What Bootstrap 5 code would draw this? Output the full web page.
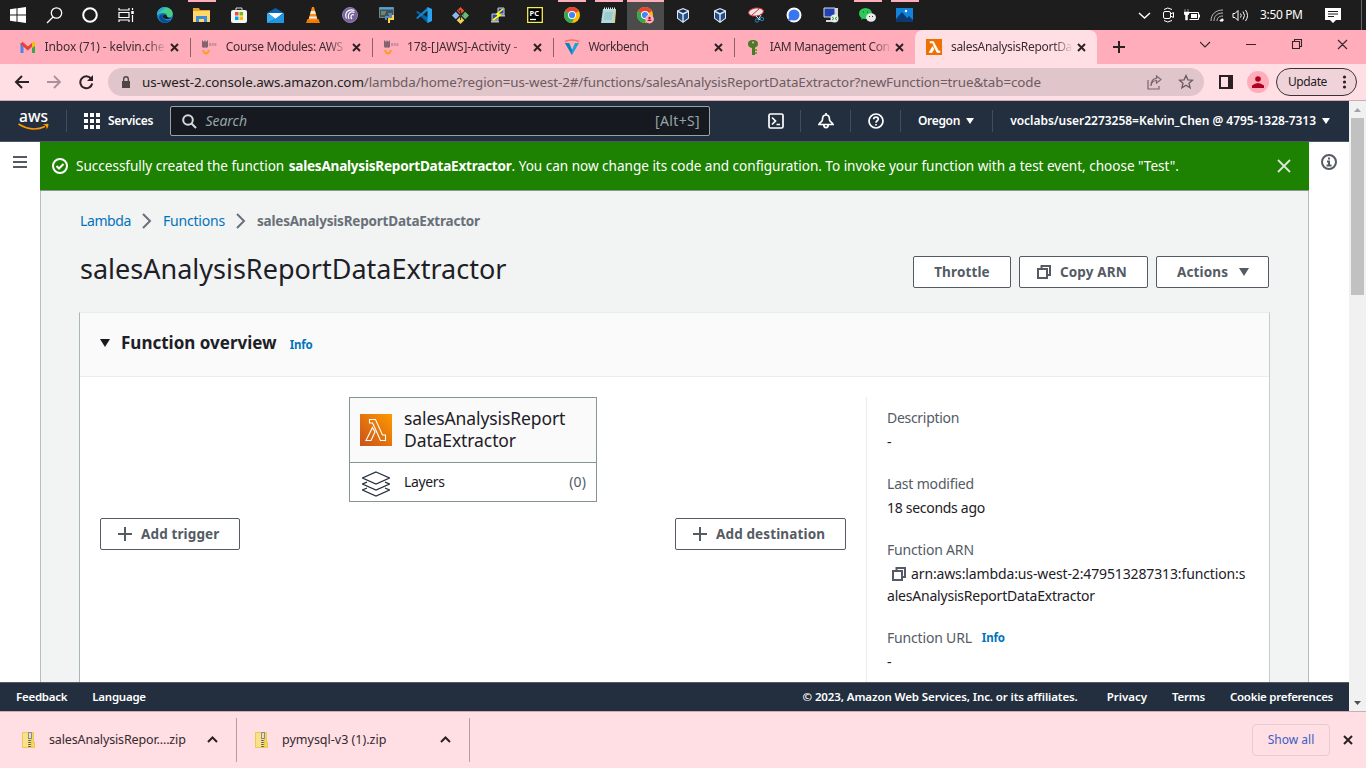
<!DOCTYPE html>
<html lang="en">
<head>
<meta charset="utf-8">
<title>salesAnalysisReportDataExtractor - Lambda</title>
<link href="https://cdn.jsdelivr.net/npm/bootstrap@5.3.0/dist/css/bootstrap.min.css" rel="stylesheet">
<script src="https://cdn.jsdelivr.net/npm/bootstrap@5.3.0/dist/js/bootstrap.bundle.min.js"></script>
<style>
body{width:1366px;height:768px;overflow:hidden;font-family:"Noto Sans","Open Sans",sans-serif;font-size:14px;line-height:22px;color:#1d2026;background:#fff}
svg{display:block;flex:none}
span,a{white-space:nowrap}
a{text-decoration:none}
.taskbar{height:30px;background:#1d1d1d;color:#fff}
.sys{width:36px}
.app{width:37px;position:relative}
.sys,.app{height:30px;display:flex;align-items:center;justify-content:center}
.app.run::before{content:"";position:absolute;top:0;left:4.5px;width:28px;height:2px;background:#ffadba}
.app.on{background:#4b4b4b}
.app.on::before{left:0;width:37px}
.tray{width:24px;display:flex;justify-content:center}
.clock{font-size:12px;width:43px;letter-spacing:-.35px}
.strip{height:34px;background:#ffadba;padding-left:9px}
.tab{width:181.3px;height:34px;padding-left:11px;position:relative;font-size:12px;color:#3c2c33}
.tab .ttl{width:122px;margin-left:8.5px;overflow:hidden;-webkit-mask-image:linear-gradient(90deg,#000 84%,transparent)}
.tab+.tab:not(.active)::before{content:"";position:absolute;left:0;top:8px;width:1px;height:19px;background:#8e6169}
.tab.active{background:#ffdee4;border-radius:8px 8px 0 0}
.tab .x{margin-left:auto;margin-right:11px}
.urlrow{height:36px;background:#ffdee4;padding-left:14px}
.pill{width:1096px;height:28px;border-radius:14px;background:#e0c5ca;padding:0 9px 0 11px;color:#6d5b60;font-size:13.4px;letter-spacing:-.09px}
.pill b{font-weight:400;color:#241d20}
.avatar{width:22px;height:22px;border-radius:50%;background:#ffadba}
.upd{width:81px;height:28px;border:1px solid #3a3236;border-radius:14px;background:#f0d3d9;font-size:12px;padding:0 7px 0 11px}
.view{height:611px;border-top:1px solid #c9adb2}
.awsnav{height:41px;background:#232f3e;color:#fff;font-size:12px;border-bottom:1px solid #4d5763;padding-left:18px;font-weight:600}
.vr1{width:1px;height:22px;background:#414d5c}
.find{width:540px;height:30px;border:1px solid #95a5a6;border-radius:2px;background:#16191f;color:#95a5a6;font-size:14px;font-weight:400;padding:0 9px 0 11px}
.stage{height:540px;overflow:hidden}
.side{width:40px;background:#fff}
.main{width:1269px;background:#f2f3f3;border:solid #b5bdbd;border-width:0 1px}
.flash{height:49px;margin:0 -1px;background:#1d8102;color:#fff;padding:0 17px 0 12px;border-bottom:1px solid #8a9690;position:relative;font-size:13.6px;letter-spacing:-.035px}
.flash strong{letter-spacing:-.25px;margin-left:1px}
.crumbs{margin:19px 0 0 39px;height:22px}
.crumbs a,.info{color:#0073bb}
.crumbs strong{color:#687078;font-size:13.5px}
.headrow{margin:14px 39px 0;height:50px}
h1{font-size:27px;line-height:36px;font-weight:400;margin:-5px 0 0}
.ab{height:32px;border:1px solid #545b64;border-radius:2px;background:#fff;color:#545b64;font-weight:700;display:flex;align-items:center;font-size:13.5px;letter-spacing:.13px}
.headrow .ab{margin-top:1px}
.panel{margin:16px 38px 0 38px;height:380px;background:#fff;border:1px solid #eaeded;border-color:#eaeded #c5cccc #eaeded #aab7b8}
.phead{height:64px;background:#fafafa;border-bottom:1px solid #eaeded;padding-left:20px}
h2{font-size:17px;font-weight:700;margin:-4px 0 0 11px;line-height:22px}
.info{font-size:11.5px;font-weight:700;letter-spacing:-.15px}
.fn{width:248px;height:105px;border:1px solid #879596;margin:20px auto 0}
.fntop{height:65px;background:#fafafa;border-bottom:1px solid #879596;font-size:17.5px;letter-spacing:-.1px;line-height:22px;padding:0 0 2px 10px}
.diagram{width:786px;padding:0 20px}
.details{margin-top:20px;border-left:1px solid #eaeded;padding:10px 0 0 20px;flex:1;letter-spacing:-.18px}
.details dt{font-weight:400;color:#545b64;height:22px}
.details dd{margin:2px 0 20px}
.sbar{width:17px;background:#f1f1f1}
.thumb{width:13px;height:177px;background:#c1c1c1;margin:2px auto auto}
.foot{height:29px;background:#232f3e;border-top:1px solid #545b64;color:#fff;font-size:11.5px;font-weight:600;padding:0 16px}
.dl{height:57px;background:#ffdee4;border-top:1px solid #c9adb2;font-size:12.5px;color:#332a2e}
.item{width:237px;height:44px;border-right:1px solid #b59ca1;padding:0 18px 0 22px;margin-bottom:1px}
.showall{width:78px;height:32px;border:1px solid #e3ccd4;border-radius:4px;color:#3a5fc4;font-size:12px}
.f-t1{letter-spacing:-.11px}.f-t2{letter-spacing:-.3px}.f-t3{letter-spacing:-.14px}.f-t4{letter-spacing:-.48px}.f-t5{letter-spacing:-.38px}.f-t6{letter-spacing:-.3px}
.f-upd{letter-spacing:-.4px}.f-serv,.f-or{letter-spacing:-.34px}.f-search{letter-spacing:-.05px}.f-alt{letter-spacing:.35px}.f-voc{letter-spacing:-.03px}
.f-lam{letter-spacing:-.39px}.f-fun{letter-spacing:-.2px}.f-crumb{letter-spacing:-.2px}
.f-lay{letter-spacing:-.35px}.f-zero{letter-spacing:.1px}
.f-d1{letter-spacing:-.3px}.f-d3{letter-spacing:-.29px}.f-d5{letter-spacing:-.13px}.f-d6{letter-spacing:-.21px}
.f-f1,.f-f2{letter-spacing:-.25px}.f-f3{letter-spacing:-.1px}.f-f5,.f-f6{letter-spacing:-.27px}
.f-z1{letter-spacing:-.14px}
</style>
</head>
<body>
<svg width="0" height="0" class="position-absolute"><defs>
<g id="cross"><path d="M1 1l7 7M8 1l-7 7" stroke="#2a2024" stroke-width="1.9"/></g>
<g id="chrome"><circle cx="8" cy="8" r="8" fill="#fbbc05"/><path d="M8 8L1.100 4A8 8 0 0 1 14.900 4z" fill="#ea4335"/><path d="M8 8L1.100 4A8 8 0 0 0 7.800 16L11 9.500z" fill="#34a853"/><circle cx="8" cy="8" r="4" fill="#fff"/><circle cx="8" cy="8" r="3.100" fill="#4285f4"/></g>
<g id="vbox"><path d="M6 0l6 2.500v8L6 15 0 10.500v-8z" fill="#dfe8f3"/><path d="M6 1.200l4.300 1.800L6 5 1.700 3z" fill="#14305c"/><path d="M1 4.300L5.300 6.400v6.800L1 10zM11 4.300L6.700 6.400v6.800L11 10z" fill="#254d86"/></g>
<g id="canvas"><path d="M1 8V1l2 2 1-2 1 2 2-2v7l-2 1-1-1-1 1z" fill="#82636f"/><path d="M8 5.500h8" stroke="#c98e9b" stroke-width="3" stroke-dasharray="2 .7"/><path d="M2 11c1 4.500 5 4.500 6 0" fill="none" stroke="#ff9b22" stroke-width="2"/></g>
<g id="zip"><path d="M.500.500h9v15h-9z" fill="#f9e08a" stroke="#ecc94f"/><path d="M9.500 10.500h3v5h-3zM9.500.500h2v10h-2z" fill="#f7d564" stroke="#ecc94f"/><path d="M7.500 6v10" stroke="#555" stroke-width="2.500" stroke-dasharray="1 1"/><path d="M6.500.500h3v6h-3z" fill="#ddd" stroke="#777" stroke-width=".8"/></g>
<g id="copy"><path d="M1 4h9v9H1zM4.500 4V1H13v9H10" fill="none" stroke="#545b64" stroke-width="2"/></g>
</defs></svg>

<div class="taskbar d-flex align-items-center">
 <div class="sys"><svg width="16" height="16"><path d="M0 2.300L6.500 1.300V7.500H0zM7.500 1.200L16 0v7.500H7.500zM0 8.500h6.500v6.200L0 13.700zM7.500 8.500H16V16l-8.500-1.200z" fill="#fff"/></svg></div>
 <div class="sys"><svg width="17" height="17" fill="none" stroke="#fff" stroke-width="1.300"><circle cx="10.500" cy="6" r="5.200"/><path d="M7 10L1 16"/></svg></div>
 <div class="sys"><svg width="16" height="16"><circle cx="8" cy="8" r="6.800" fill="none" stroke="#fff" stroke-width="2"/></svg></div>
 <div class="sys" style="margin-right:2px"><svg width="17" height="16" fill="none" stroke="#fff" stroke-width="1.200"><path d="M1 1v2h10V1M1 5.500h10v5H1zM1 15v-2h10v2M14.500 1v2M14.500 8v7"/><path d="M14.500 4v3" stroke-width="2.500"/></svg></div>
 <div class="app"><svg width="16" height="16"><circle cx="8" cy="8" r="8" fill="#1687d0"/><path d="M0 8C0 2 6-1 11 .800c5 2 6 7.200 3 9.200-2 1-4 .500-4-.800C11 6 5 4 0 8z" fill="#47cf83"/><path d="M0 8C0 3 4 0 8 0c1 2-4 3-8 8z" fill="#2aa6df"/><path d="M6 7c-2 4 2 8 7.500 5.800C11 17 4 17 2 11 2 8 4 7 6 7z" fill="#0c4c94"/><path d="M6 8.500C5 12 10 13 14.500 11c0-1-4 .500-4.500-1.800C9 7 7 7 6 8.500z" fill="#1d1d1d"/></svg></div>
 <div class="app run"><svg width="17" height="14"><path d="M0 0h6l1 2h10v3H0z" fill="#e2a526"/><path d="M0 3h17v11H0z" fill="#ffd86b"/><path d="M3 14V8h11v6h-3v-3H6v3z" fill="#3d8ed9"/></svg></div>
 <div class="app"><svg width="16" height="16"><path d="M5 4V1h6v3" fill="none" stroke="#ddd"/><rect y="3" width="16" height="13" rx="2" fill="#f4f4f4"/><path d="M4 5h3.500v3.500H4z" fill="#f25022"/><path d="M8.500 5H12v3.500H8.500z" fill="#7fba00"/><path d="M4 9.500h3.500V13H4z" fill="#00a4ef"/><path d="M8.500 9.500H12V13H8.500z" fill="#ffb900"/></svg></div>
 <div class="app"><svg width="17" height="15"><path d="M0 5l8.500-5L17 5v10H0z" fill="#0a62b1"/><path d="M1 5h15l-7.500 6z" fill="#fff"/><path d="M0 5l8.500 5.500L0 15z" fill="#35aef0"/><path d="M17 5v10H0L9 10.500z" fill="#2196e0"/></svg></div>
 <div class="app"><svg width="14" height="16"><path d="M0 16l1.500-4h11L14 16z" fill="#f07a00"/><path d="M2.500 12.500L6 0h2l3.500 12.500C9 14 5 14 2.500 12.500z" fill="#ff8b0d"/><path d="M5 4h4l.8 3H4.200zM3.500 9.500h7l.5 2H3z" fill="#eee"/></svg></div>
 <div class="app"><svg width="16" height="16" fill="none" stroke="#fff"><circle cx="8" cy="8" r="7.500" fill="#75639b" stroke="#8f80b0"/><path d="M12.500 3.500C6.500 1 2 6 4.500 11.500M12.500 5.500C8.500 3.500 5 7 7 12M12 8c-3-1.500-4 2-2 4" stroke-width="1.200"/></svg></div>
 <div class="app"><svg width="16" height="16"><path d="M.500.500h14v10H.500z" fill="#45505a" stroke="#71828f"/><path d="M.500.500h14v2H.500z" fill="#4da4d8"/><path d="M2 5h5M2 7h4" stroke="#80c880"/><path d="M9 6h4v4H8v3H6v-4h4z" fill="#4b8bbe"/><path d="M15 8v5h-4v3H9v-5h4V8z" fill="#ffd343"/></svg></div>
 <div class="app"><svg width="16" height="16"><path d="M0 5l1.500-1L16 13l-4.500 3z" fill="#0065a9"/><path d="M0 11l1.500 1L12 3.500V0z" fill="#0f86cf"/><path d="M11.500 0L16 2v12l-4.500 2z" fill="#2ba4ef"/></svg></div>
 <div class="app"><svg width="17" height="17"><path d="M8.500 0l3.800 3.800-3.800 3.700-3.800-3.700z" fill="#f05133"/><path d="M3.800 4.700l3.700 3.800-3.700 3.800L0 8.500z" fill="#8fb8f0"/><path d="M13.200 4.700L17 8.500l-3.800 3.800-3.700-3.800z" fill="#67bd6b"/><path d="M8.500 9.500l3.800 3.700L8.500 17l-3.800-3.800z" fill="#f1d15a"/><path d="M8.500 3v10M6 3l5.500 5" stroke="#332" stroke-width="1"/></svg></div>
 <div class="app"><svg width="16" height="16"><path d="M8 1h6v6H8zM2 7h6v6H2z" fill="#2c48b5" stroke="#ccc"/><path d="M7 8.500h8M1 14.500h8" stroke="#bbb" stroke-width="2"/><path d="M13 2L7 7l3 1-7 5" stroke="#ff0" stroke-width="1.600" fill="none"/></svg></div>
 <div class="app"><svg width="16" height="16"><path d="M.700.700h14.600v14.600H.700z" fill="#000" stroke="#f4ef4e" stroke-width="1.300"/><path d="M3 12.500h6" stroke="#fff" stroke-width="1.300"/><text x="2.500" y="9" fill="#fff" font-size="7.500" font-weight="700">PC</text></svg></div>
 <div class="app run"><svg width="16" height="16"><use href="#chrome"/></svg></div>
 <div class="app run"><svg width="16" height="16"><path d="M2 2h13l-2 14H0z" fill="#b1dadd"/><path d="M14 3h1l-1 13h-2z" fill="#e3c878"/><path d="M3 1.500h12" stroke="#e8eeee" stroke-width="2" stroke-dasharray="1 1"/><path d="M4 6h8M3.500 8h8M3 10h8M3 12h8" stroke="#75aeb5" stroke-width=".7"/></svg></div>
 <div class="app run on"><svg width="17" height="17"><use href="#chrome"/><circle cx="12.500" cy="12" r="4.400" fill="#ffadba"/><circle cx="12.500" cy="11" r="1.200" fill="#a31335"/><path d="M10.500 14c0-2 4-2 4 0z" fill="#a31335"/></svg></div>
 <div class="app"><svg width="12" height="15"><use href="#vbox"/></svg></div>
 <div class="app"><svg width="12" height="15"><use href="#vbox"/></svg></div>
 <div class="app"><svg width="17" height="16"><ellipse cx="8" cy="5" rx="7.500" ry="4" fill="#e6e7eb" stroke="#d22b2f" transform="rotate(-8 8 5)"/><path d="M4 8l7-6" stroke="#d22b2f"/><path d="M8 9l4 4M13 8l-3 5" stroke="#ddd"/><circle cx="9" cy="13.500" r="1.700" fill="none" stroke="#2689c9"/><circle cx="14" cy="12" r="1.700" fill="none" stroke="#2689c9"/></svg></div>
 <div class="app"><svg width="16" height="16"><circle cx="8" cy="8" r="6.500" fill="#3a76f0" stroke="#fff" stroke-width="2"/><path d="M2 14l1-4 3 3z" fill="#3a76f0"/></svg></div>
 <div class="app"><svg width="16" height="16"><path d="M1 1h11v9H1z" fill="#2341b4" stroke="#ddd"/><path d="M12 1h3v10h-3zM3 13h8v2H3z" fill="#d8d8d8"/><circle cx="11.500" cy="11.500" r="4" fill="#e6eee5"/><path d="M9 10l2 1.500L9 13M14 10l-2 1.500 2 1.500" stroke="#389646" fill="none"/></svg></div>
 <div class="app run"><svg width="17" height="15"><ellipse cx="6.500" cy="5.500" rx="6.500" ry="5.500" fill="#2dc956"/><path d="M2 12l1-3h3z" fill="#2dc956"/><ellipse cx="12" cy="9.500" rx="5" ry="4.200" fill="#e9e9e9"/><path d="M4 4h1M8 4h1M10 8.500h1M13 8.500h1" stroke="#333"/></svg></div>
 <div class="app run"><svg width="17" height="14"><path d="M0 0h17v14H0z" fill="#1283dd"/><path d="M0 11l6-7 5 6 2-2 4 4v2H0z" fill="#0c3970"/><circle cx="10" cy="3" r="1.200" fill="#fff"/></svg></div>
 <div class="d-flex align-items-center ms-auto">
  <div class="tray"><svg width="13" height="7" style="margin-right:2px"><path d="M1 1l5.500 5L12 1" fill="none" stroke="#fff" stroke-width="1.400"/></svg></div>
  <div class="tray"><svg width="13" height="16" fill="none" stroke="#fff" style="margin-right:2px"><rect x="1.500" y="4.500" width="7" height="7" rx="1.500"/><path d="M8.500 7l3-1.500v5l-3-1.500M2 2.500Q5.500-.500 10 2.500M2 13.500Q5.500 16.500 10 13.500"/></svg></div>
  <div class="tray"><svg width="16" height="12" style="margin-right:2px"><path d="M4.500 3.500h10v7h-9" fill="none" stroke="#fff"/><path d="M7 5h6v4H7zM14.500 5.500H16v3h-1.500z" fill="#fff"/><path d="M1 0v3M4 0v3M0 3h5v2L3.500 6.500V11h-2V6.500L0 5z" fill="#fff" stroke="#fff" stroke-width=".5"/></svg></div>
  <div class="tray"><svg width="14" height="13" fill="none" stroke="#bbb"><path d="M1 12C1 5 6 1 13 1M4 12c0-5 3-8 9-8M7 12c0-3 2-5 6-5"/><path d="M10 12c0-1 1-2 3-2v2z" fill="#fff" stroke="#fff"/></svg></div>
  <div class="tray"><svg width="17" height="13" fill="none" stroke="#fff" style="margin-right:2px"><path d="M1 4.500h2L6 1.500v10L3 8.500H1zM8.500 4.500q1.500 2 0 4M11 2.500q3 4 0 8M13.500 1q4 5.500 0 11"/></svg></div>
  <div class="clock" style="margin-left:7px"><span>3:50 PM</span></div>
  <div style="margin:0 20px 0 22px"><svg width="16" height="15"><path d="M0 0h16v12h-5l-3 3-3-3H0z" fill="#fff"/><path d="M3 3.500h10M3 6h10M3 8.500h6" stroke="#1d1d1d"/></svg></div>
  <div style="width:5px;height:30px;border-left:1px solid #666"></div>
 </div>
</div>

<div class="strip d-flex">
 <div class="tab d-flex align-items-center"><svg width="16" height="12"><path d="M2 12V2" stroke="#4285f4" stroke-width="3"/><path d="M13.500 12V2" stroke="#34a853" stroke-width="3"/><path d="M1.500 2l6.300 5.500L14 2" fill="none" stroke="#ea4335" stroke-width="3"/><path d="M12 1h3v4l-3 2z" fill="#fbbc04"/></svg><div class="ttl"><span class="f-t1">Inbox (71) - kelvin.che</span></div><svg class="x" width="9" height="9"><use href="#cross"/></svg></div>
 <div class="tab d-flex align-items-center"><svg width="16" height="16"><use href="#canvas"/></svg><div class="ttl"><span class="f-t2">Course Modules: AWS</span></div><svg class="x" width="9" height="9"><use href="#cross"/></svg></div>
 <div class="tab d-flex align-items-center"><svg width="16" height="16"><use href="#canvas"/></svg><div class="ttl"><span class="f-t3">178-[JAWS]-Activity - </span></div><svg class="x" width="9" height="9"><use href="#cross"/></svg></div>
 <div class="tab d-flex align-items-center"><svg width="16" height="16"><path d="M1 4h4l3 7 3-7h4L8 16z" fill="#19a4d9"/><path d="M8 16V11L5 4H1z" fill="#0b82ba"/><path d="M1 2.500q7-3 14 0" fill="none" stroke="#ff6b4a" stroke-width="1.500"/></svg><div class="ttl"><span class="f-t4">Workbench</span></div><svg class="x" width="9" height="9"><use href="#cross"/></svg></div>
 <div class="tab d-flex align-items-center"><svg width="16" height="16"><path d="M8 1c3 0 5 1 5 4 0 2-1 3-3 3.500V16H7V9C4 8.500 3 7 3 5c0-3 2-4 5-4z" fill="#4d7a2a"/><path d="M10 10h2v2h-2zM10 13h2v2h-2z" fill="#759c3e"/><circle cx="8" cy="3.500" r="1" fill="#ffadba"/></svg><div class="ttl"><span class="f-t5">IAM Management Con</span></div><svg class="x" width="9" height="9"><use href="#cross"/></svg></div>
 <div class="tab active d-flex align-items-center"><svg width="16" height="16"><path d="M0 0h16v16H0z" fill="#ed7100"/><path d="M4 2.500h3.500l5 9.500H14v1.500h-3L7.500 6.500 7 4H4zM6.500 7.500L8 10l-2 3.500H3z" fill="#fff" stroke="#fff" stroke-width=".6"/></svg><div class="ttl"><span class="f-t6">salesAnalysisReportDa</span></div><svg class="x" width="9" height="9"><use href="#cross"/></svg></div>
 <div class="d-flex align-items-center" style="margin-left:16px"><svg width="12" height="12"><path d="M6 0v12M0 6h12" stroke="#2a2024" stroke-width="2"/></svg></div>
 <svg class="ms-auto" width="148" height="28" style="margin-right:18px" fill="none" stroke="#33262a" stroke-width="1.100"><path d="M0 12l5 5 5-5M46 14.500h10M92.500 11.500h7v7h-7zM94.500 11.500v-2h7v7h-2M138 10l9 9M147 10l-9 9"/></svg>
</div>

<div class="urlrow d-flex align-items-center">
 <svg width="94" height="16" fill="none" stroke="#2b2226" stroke-width="2"><path d="M15 8H2M8 2L2 8l6 6"/><path d="M33 8h13M40 2l6 6-6 6" stroke="#a9929a" stroke-width="1.800"/><path d="M77 4.500a6 6 0 1 0 1.200 5"/><path d="M79 1v6h-6z" fill="#2b2226" stroke="none"/></svg>
 <div class="pill d-flex align-items-center"><svg width="14" height="14" style="margin-right:9px"><path d="M3 6h8v7H3z" fill="#4f4549"/><path d="M4.700 6V4a2.300 2.300 0 0 1 4.600 0v2" fill="none" stroke="#4f4549" stroke-width="1.400"/></svg><span><b>us-west-2.console.aws.amazon.com</b>/lambda/home?region=us-west-2#/functions/salesAnalysisReportDataExtractor?newFunction=true&amp;tab=code</span>
 <svg class="ms-auto" width="15" height="15" style="margin-right:16px" fill="none" stroke="#78676c" stroke-width="1.200"><path d="M1 5v9h11v-3M4 11c.500-4 2-5.500 5.500-5.500V8L14 4.500 9.500 1v2.300C5.500 3.500 4 7 4 11z"/></svg>
 <svg width="16" height="16" style="margin-right:1px" fill="none" stroke="#6b5a60" stroke-width="1.300"><path d="M8 1.500l1.900 4.300 4.600.400-3.500 3 1.100 4.600L8 11.300l-4.100 2.500L5 9.200l-3.500-3 4.600-.4z"/></svg></div>
 <svg width="14" height="14" style="margin:0 14px 0 15px"><path d="M1 1h12v12H1z" fill="none" stroke="#2a2024" stroke-width="2"/><path d="M9 1h4v12H9z" fill="#2a2024"/></svg>
 <div class="avatar d-flex justify-content-center align-items-center"><svg width="12" height="12"><circle cx="6" cy="3" r="2.800" fill="#b00020"/><path d="M0 12V9.500Q6 4.500 12 9.500V12z" fill="#b00020"/></svg></div>
 <div class="upd d-flex align-items-center justify-content-between" style="margin-left:7px"><span class="f-upd">Update</span><svg width="9" height="14"><g fill="#2a2024"><circle cx="4.500" cy="2" r="1.600"/><circle cx="4.500" cy="7" r="1.600"/><circle cx="4.500" cy="12" r="1.600"/></g></svg></div>
</div>

<div class="view d-flex">
 <div class="d-flex flex-column" style="width:1349px">
  <nav class="awsnav d-flex align-items-center">
   <svg width="32" height="22" overflow="visible"><text x="1" y="11.500" font-size="16" fill="#fff" font-weight="500" textLength="29" lengthAdjust="spacingAndGlyphs">aws</text><path d="M.500 14Q14 22.500 27 16.500" fill="none" stroke="#ff9900" stroke-width="1.700"/><path d="M25 14.500q6-1.500 5.500 0 0 3-2 5 .800-4-3.500-5z" fill="#ff9900"/></svg>
   <div class="vr1" style="margin:0 17px 0 16px"></div>
   <svg width="16" height="16" fill="#fff"><path d="M0 0h4v4H0zM6 0h4v4H6zM12 0h4v4h-4zM0 6h4v4H0zM6 6h4v4H6zM12 6h4v4h-4zM0 12h4v4H0zM6 12h4v4H6zM12 12h4v4h-4z"/></svg>
   <div style="width:62px;margin-left:8px"><span class="f-serv">Services</span></div>
   <div class="find d-flex align-items-center"><svg width="15" height="15" fill="none" stroke="#d5dbdb" stroke-width="2"><circle cx="6" cy="6" r="4.800"/><path d="M9.500 9.500L14 14"/></svg><em style="margin-left:8.500px"><span class="f-search">Search</span></em><span class="ms-auto f-alt">[Alt+S]</span></div>
   <svg width="16" height="16" style="margin:0 16px 0 58px" fill="none" stroke="#fff" stroke-width="1.700"><rect x="1" y="1" width="14" height="14" rx="1.500"/><path d="M4 4.500L7.500 8 4 11.500M8.500 11.500H12"/></svg><div class="vr1"></div>
   <svg width="16" height="16" style="margin:0 16px 0 17px" fill="none" stroke="#fff" stroke-width="1.700"><path d="M8 0v2M8 2C5 2 4.500 4.500 4.500 6.500 4.500 9 2 9 1 11.500h14C14 9 11.500 9 11.500 6.500 11.500 4.500 11 2 8 2zM5.800 12a2.200 2.600 0 0 0 4.400 0"/></svg><div class="vr1"></div>
   <svg width="16" height="16" style="margin:0 16px 0 17px" fill="none" stroke="#fff" stroke-width="1.700"><circle cx="8" cy="8" r="7"/><path d="M5.700 6.300c0-3 4.600-3 4.600 0C10.300 7.800 8 7.800 8 9.700M8 11v1.600"/></svg><div class="vr1"></div>
   <span class="f-or" style="margin-left:17px">Oregon</span><svg width="8" height="6" style="margin-left:6px"><path d="M0 0h8L4 6z" fill="#fff"/></svg><div class="vr1 ms-auto"></div>
   <span class="f-voc" style="margin-left:17px">voclabs/user2273258=Kelvin_Chen @ 4795-1328-7313</span><svg width="8" height="6" style="margin:0 19px 0 6px"><path d="M0 0h8L4 6z" fill="#fff"/></svg>
  </nav>
  <div class="stage d-flex">
   <aside class="side"><svg width="14" height="12" style="margin:14px 0 0 13px"><path d="M0 1h14M0 6h14M0 11h14" stroke="#545b64" stroke-width="2"/></svg></aside>
   <main class="main">
    <div class="flash d-flex align-items-center">
     <svg width="16" height="16" fill="none" stroke="#fff" stroke-width="2"><circle cx="8" cy="8" r="7"/><path d="M4.500 8l2.500 2.500 4.500-4.500"/></svg>
     <span style="margin-left:8px">Successfully created the function <strong>salesAnalysisReportDataExtractor</strong>. You can now change its code and configuration. To invoke your function with a test event, choose "Test".</span>
     <svg class="ms-auto" width="16" height="16"><path d="M2 2l12 12M14 2L2 14" stroke="#dbe8d7" stroke-width="1.800"/></svg>
    </div>
    <div class="crumbs d-flex align-items-center"><div style="width:62px"><a href="#" class="f-lam">Lambda</a></div><svg width="21" height="16"><path d="M1 1l7 7-7 7" fill="none" stroke="#687078" stroke-width="2"/></svg><div style="width:73px"><a href="#" class="f-fun">Functions</a></div><svg width="21" height="16"><path d="M1 1l7 7-7 7" fill="none" stroke="#687078" stroke-width="2"/></svg><strong><span class="f-crumb">salesAnalysisReportDataExtractor</span></strong></div>
    <div class="headrow d-flex align-items-center">
     <h1><span>salesAnalysisReportDataExtractor</span></h1>
     <div class="ab ms-auto justify-content-center" style="width:98px"><span>Throttle</span></div>
     <div class="ab ms-2" style="width:129px;padding-left:17px"><svg width="14" height="14"><use href="#copy"/></svg><span style="margin-left:9px">Copy ARN</span></div>
     <div class="ab ms-2" style="width:113px;padding-left:20px"><span>Actions</span><svg width="10" height="8" style="margin-left:11px"><path d="M0 0h10L5 8z" fill="#545b64"/></svg></div>
    </div>
    <section class="panel">
     <div class="phead d-flex align-items-center"><svg width="10" height="8" style="margin-top:-4px"><path d="M0 0h10L5 8z" fill="#16191f"/></svg><h2><span>Function overview</span></h2><a href="#" class="info" style="margin-left:13px">Info</a></div>
     <div class="d-flex" style="height:316px">
      <div class="diagram">
       <div class="fn">
        <div class="fntop d-flex align-items-center"><svg width="32" height="32" style="margin-top:2px"><defs><linearGradient id="og" x1="0" y1="1" x2="1" y2="0"><stop stop-color="#c8511b"/><stop offset="1" stop-color="#f90"/></linearGradient></defs><path d="M0 0h32v32H0z" fill="url(#og)"/><path d="M9.500 5.500h6l7 15.500h3v5.500h-5L14 12l-1.500-3h-3zM12.500 13.500L15 18l-4 8.500H6z" fill="none" stroke="#fff" stroke-width="1.100"/></svg><div style="margin-left:12px"><span>salesAnalysisReport</span><br><span>DataExtractor</span></div></div>
        <div class="d-flex align-items-center" style="height:38px;padding:0 10px 0 12px"><svg width="28" height="26" style="margin-top:3px" fill="none" stroke="#232f3e" stroke-width="1.300"><path d="M14 1l13.500 6L14 13 .500 7zM5 11.200L.500 13 14 19l13.500-6-4.500-1.800M5 17L.500 19 14 25l13.500-6-4.500-2"/></svg><span class="f-lay" style="margin-left:14px">Layers</span><span class="ms-auto f-zero" style="color:#545b64">(0)</span></div>
       </div>
       <div class="d-flex justify-content-between" style="margin-top:16px">
        <div class="ab" style="width:140px;padding-left:17px"><svg width="14" height="14"><path d="M7 0v14M0 7h14" stroke="#545b64" stroke-width="2"/></svg><span style="margin-left:9px">Add trigger</span></div>
        <div class="ab" style="width:171px;padding-left:17px"><svg width="14" height="14"><path d="M7 0v14M0 7h14" stroke="#545b64" stroke-width="2"/></svg><span style="margin-left:9px">Add destination</span></div>
       </div>
      </div>
      <dl class="details mb-0">
       <dt><span class="f-d1">Description</span></dt><dd>-</dd>
       <dt><span>Last modified</span></dt><dd><span class="f-d3">18 seconds ago</span></dd>
       <dt><span>Function ARN</span></dt><dd><div class="d-flex align-items-center"><svg width="14" height="14" style="margin:0 5px"><use href="#copy"/></svg><span class="f-d5">arn:aws:lambda:us-west-2:479513287313:function:s</span></div><span class="f-d6">alesAnalysisReportDataExtractor</span></dd>
       <dt class="d-flex"><span>Function URL</span><a href="#" class="info" style="margin-left:10px">Info</a></dt><dd>-</dd>
      </dl>
     </div>
    </section>
   </main>
   <aside class="side"><svg width="16" height="16" style="margin:12px 0 0 12px" fill="none" stroke="#545b64" stroke-width="2"><circle cx="8" cy="8" r="7"/><path d="M8 3.500v2M6 7.500h2V12M5.500 11.500h5"/></svg></aside>
  </div>
  <footer class="foot d-flex align-items-center"><span class="f-f1">Feedback</span><span class="f-f2" style="margin-left:25px">Language</span><span class="f-f3 ms-auto">© 2023, Amazon Web Services, Inc. or its affiliates.</span><span style="margin-left:29px">Privacy</span><span class="f-f5" style="margin-left:25px">Terms</span><span class="f-f6" style="margin-left:25px">Cookie preferences</span></footer>
 </div>
 <div class="sbar d-flex flex-column align-items-center"><svg width="17" height="15"><path d="M5 11h7L8.500 7z" fill="#a3a3a3"/></svg><div class="thumb"></div><svg width="17" height="17"><path d="M5 7h7l-3.500 4z" fill="#505050"/></svg></div>
</div>

<div class="dl d-flex align-items-center">
 <div class="item d-flex align-items-center"><svg width="14" height="16"><use href="#zip"/></svg><span class="f-z1" style="margin-left:13px">salesAnalysisRepor....zip</span><svg class="ms-auto" width="11" height="7"><path d="M1 6l4.500-4.500L10 6" fill="none" stroke="#2a2024" stroke-width="2"/></svg></div>
 <div class="item d-flex align-items-center" style="width:233px;padding-left:18px"><svg width="14" height="16"><use href="#zip"/></svg><span style="margin-left:13px">pymysql-v3 (1).zip</span><svg class="ms-auto" width="11" height="7"><path d="M1 6l4.500-4.500L10 6" fill="none" stroke="#2a2024" stroke-width="2"/></svg></div>
 <div class="showall d-flex align-items-center justify-content-center ms-auto"><span>Show all</span></div>
 <svg width="10" height="10" style="margin:0 13px"><path d="M1 1l8 8M9 1L1 9" stroke="#2a2024" stroke-width="2"/></svg>
</div>
</body>
</html>
